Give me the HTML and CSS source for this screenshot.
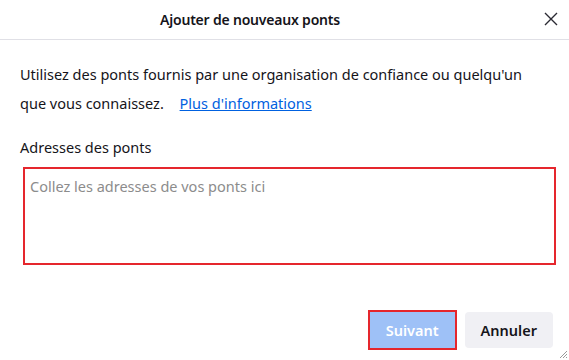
FILE: index.html
```html
<!DOCTYPE html>
<html>
  <head>
    <meta charset="UTF-8">
    <meta name="viewport" content="width=device-width, initial-scale=1.0">
    <title>Ajouter de nouveaux ponts</title>
    <link rel="stylesheet" href="styles.css">
  </head>
  <body>
    <div id="dialog" class="flex-column">
      <header class="flex flex-center">
        <h1>Ajouter de nouveaux ponts</h1>
        <button class="close-btn" aria-label="Fermer">
          <svg width="14" height="14" viewBox="0 0 14 14">
            <path d="M1 1 L13 13 M13 1 L1 13" stroke="#2b2a33" stroke-width="1.4" fill="none"/>
          </svg>
        </button>
      </header>

      <div id="content" class="flex-grow-1 flex-column">
        <p class="intro"><span>Utilisez des ponts fournis par une organisation de confiance ou quelqu'un</span><br><span>que vous connaissez.</span> <a href="#" class="learn-more">Plus d'informations</a></p>

        <label for="bridgeInput" class="field-label">Adresses des ponts</label>
        <textarea id="bridgeInput" placeholder="Collez les adresses de vos ponts ici"></textarea>
      </div>

      <footer class="flex">
        <button class="btn btn-primary">Suivant</button>
        <button class="btn btn-secondary">Annuler</button>
      </footer>

      <svg class="grip" width="9" height="9" viewBox="0 0 9 9">
        <path d="M8 1 L1 8 M8 4 L4 8 M8 7 L7 8" stroke="#9a9a9a" stroke-width="1" fill="none"/>
      </svg>
    </div>
  </body>
</html>
```

FILE: styles.css
```css
/* Variables */
:root {
	--primary-text: #15141a;
	--placeholder: #8c8c8c;
	--link-blue: #0061e0;
	--border-gray: #e0e0e6;
	--button-gray: #f0f0f4;
	--button-blue: #9ec1f7;
	--focus-red: #e5262d;
}

/* Resets */
* {
	margin: 0;
	padding: 0;
	box-sizing: border-box;
}

body {
	font-family: "Noto Sans", "Open Sans", sans-serif;
	font-size: 14px;
	color: var(--primary-text);
	background: #ffffff;
}

/* Layout */
.flex {
	display: flex;
}

.flex-center {
	justify-content: center;
	align-items: center;
}

.flex-column {
	display: flex;
	flex-direction: column;
}

.flex-grow-1 {
	flex-grow: 1;
}

#dialog {
	position: relative;
	width: 569px;
	height: 360px;
	overflow: hidden;
}

/* Header */
header {
	position: relative;
	height: 40px;
	border-bottom: 1px solid var(--border-gray);
}

h1 {
	font-size: 14px;
	font-weight: 600;
	letter-spacing: -0.2px;
	margin-left: -69px;
}

.close-btn {
	position: absolute;
	right: 11px;
	top: 12px;
	width: 14px;
	height: 14px;
	border: none;
	background: none;
}

.close-btn svg {
	display: block;
}

/* Content */
#content {
	padding: 0 20px;
}

.intro {
	margin-top: 20px;
	line-height: 29px;
	font-size: 14.5px;
}

.learn-more {
	color: var(--link-blue);
	margin-left: 12px;
}

.field-label {
	margin-top: 19px;
	font-size: 14.5px;
	line-height: 20px;
}

textarea {
	margin: 10px 0 0 3px;
	width: 533px;
	height: 98px;
	padding: 7px 5px;
	border: 2px solid var(--focus-red);
	font-family: inherit;
	font-size: 14.5px;
	line-height: 20px;
	resize: none;
	outline: none;
}

textarea::placeholder {
	color: var(--placeholder);
}

/* Footer */
footer {
	justify-content: flex-end;
	gap: 10px;
	padding: 0 16px 12px 0;
}

.btn {
	height: 36px;
	min-width: 84px;
	padding: 0 16px;
	border: none;
	border-radius: 4px;
	font-family: inherit;
	font-size: 14.5px;
	font-weight: 600;
}

.btn-primary {
	background: var(--button-blue);
	color: #ffffff;
	border-radius: 0;
	outline: 2px solid var(--focus-red);
	outline-offset: 0;
}

.btn-secondary {
	background: var(--button-gray);
	color: var(--primary-text);
	min-width: 88px;
}

.grip {
	position: absolute;
	right: 1px;
	bottom: 1px;
}
```
